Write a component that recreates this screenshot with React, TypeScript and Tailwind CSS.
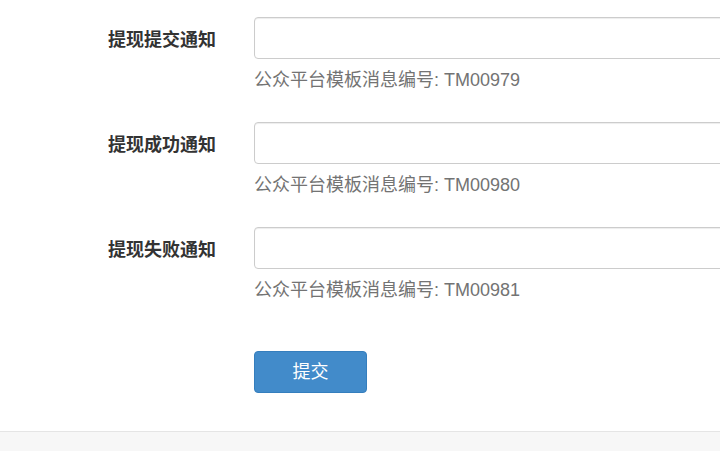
import React from "react";

const rows = [
  { label: "提现提交通知", code: "TM00979" },
  { label: "提现成功通知", code: "TM00980" },
  { label: "提现失败通知", code: "TM00981" },
];

const font = { fontFamily: '"Liberation Sans", "Noto Sans CJK SC", sans-serif' };

const App = () => {
  return (
    <div className="w-[720px] h-[451px] overflow-hidden bg-white flex flex-col" style={font}>
      <div className="flex-1 pt-[17px]">
        {rows.map((row) => (
          <div key={row.code} className="flex mb-[30px]">
            <label className="w-[216px] shrink-0 h-[42px] pt-[4px] flex items-center justify-end text-[18px] font-bold text-[#333]">
              {row.label}
            </label>
            <div className="ml-[38px] w-[520px] shrink-0">
              <input
                type="text"
                className="block w-full h-[42px] border border-[#ccc] rounded-[4px] bg-white shadow-[inset_0_1px_1px_rgba(0,0,0,0.075)] outline-none px-3"
              />
              <p className="mt-[9px] text-[18px] leading-[24px] text-[#737373]">
                公众平台模板消息编号: {row.code}
              </p>
            </div>
          </div>
        ))}
        <div className="flex pt-[19px]">
          <div className="w-[216px] shrink-0" />
          <button className="ml-[38px] w-[113px] h-[42px] rounded-[4px] bg-[#428bca] border border-[#357ebd] text-white text-[18px]">
            提交
          </button>
        </div>
      </div>
      <div className="h-[20px] border-t border-[#e5e5e5] bg-[#f7f7f7]" />
    </div>
  );
};

export default App;
